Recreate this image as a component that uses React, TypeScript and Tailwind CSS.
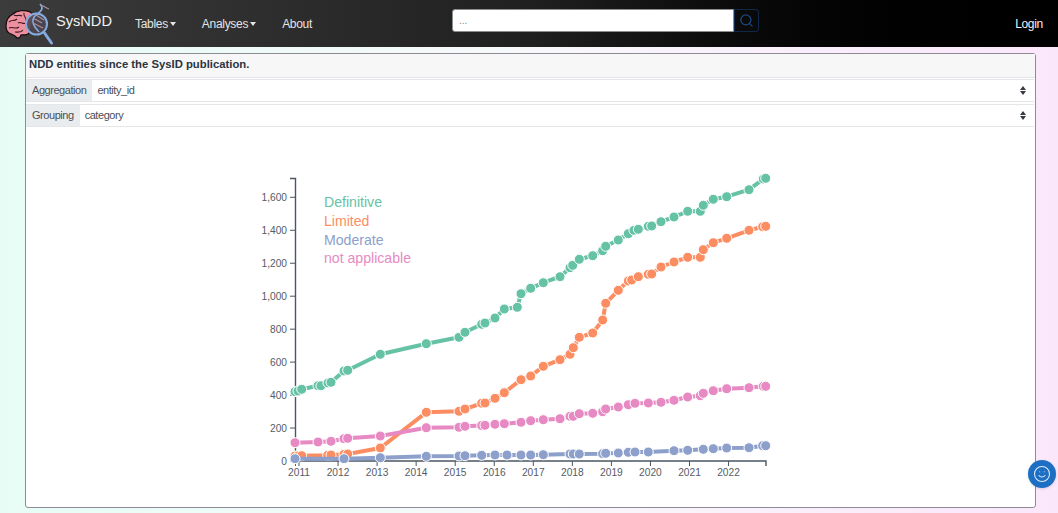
import { Search, Smile } from "lucide-react";

type Point = [number, number];

const definitive: Point[] = [
  [295, 391.7], [298, 391], [301.7, 389.3], [318, 385.7], [321, 385.7], [328, 383], [331, 382.3],
  [344, 371], [347.7, 370.3], [380.3, 354.3], [426.3, 343.7], [459, 337.3], [465, 332.3],
  [481.7, 324.3], [485, 323], [495, 318], [504.3, 309], [517.3, 307.3], [521, 293.7], [530.7, 288.3],
  [543.3, 282.7], [560, 276.7], [570, 267.7], [572.7, 265.3], [579.3, 259.3], [592.7, 255.7],
  [602.7, 250.7], [605.7, 246.3], [618.3, 240], [628.3, 233.7], [634, 230.3], [638.3, 229.3],
  [648.3, 226.3], [651.7, 226], [661, 221.7], [674, 217], [687.7, 211.3], [700.3, 211.3],
  [703.3, 205.3], [713.3, 199.3], [726.7, 196.7], [749, 189.7], [763.3, 179], [765.7, 178.3],
];

const limited: Point[] = [
  [295, 456], [298, 456], [301.7, 455.7], [327.7, 455.3], [331, 455], [344, 454.3], [347.7, 454],
  [380.3, 448], [426.3, 412.3], [459, 411.3], [465, 409], [481.7, 403.3], [485, 403], [495, 398.3],
  [504.3, 392.7], [521, 379.7], [530.7, 376], [543.3, 366.3], [560, 359.7], [570, 354.3],
  [573.3, 347.7], [579.3, 337.3], [592.7, 333], [602.7, 320], [605.7, 303.3], [618.3, 290.3],
  [628.3, 281], [631.7, 280], [638.3, 276.7], [648.3, 274.3], [651.7, 274], [661, 267], [674, 262],
  [687.7, 257.3], [700.3, 257.3], [703.3, 249.7], [713.3, 242.7], [726.7, 238.3], [749, 230.3],
  [762.7, 226.7], [765.7, 226.3],
];

const moderate: Point[] = [
  [295, 458.7], [344, 458.7], [380.3, 457.7], [426.3, 456.3], [459, 456], [465, 455.7], [481.7, 455.3],
  [495, 455], [507, 455], [521, 455], [530.7, 455], [543.3, 454.7], [570, 454], [573.3, 454],
  [579.3, 454], [602.7, 453.7], [605.7, 453.3], [618.3, 453], [628.3, 452.3], [635, 452], [648.3, 452],
  [674, 450.7], [687.7, 450.3], [703.3, 449.3], [713.3, 448.7], [726.7, 448], [749, 447.7],
  [762.7, 445.7], [765.7, 445.7],
];

const notApplicable: Point[] = [
  [295, 442.7], [318, 442], [331, 441.3], [344, 438.7], [347.7, 438.3], [380.3, 436], [426.3, 427.7],
  [459, 427.3], [465, 426.3], [481.7, 425.5], [485, 425.3], [495, 424.3], [504.3, 423.7], [521, 422.3],
  [530.7, 420.7], [543.3, 419.7], [560, 418.7], [570, 416.3], [573.3, 416.3], [579.3, 413.7],
  [592.7, 413.3], [602.7, 411.7], [605.7, 409], [618.3, 407], [628.3, 404.7], [635, 403.3], [648.3, 403],
  [661, 402.3], [674, 400.3], [687.7, 397], [700.3, 395.7], [703.3, 393.3], [713.3, 390.7],
  [726.7, 388.7], [749, 387.7], [763.3, 386.3], [765.7, 386.3],
];

const series = [
  { name: "Definitive", color: "#66c2a5", points: definitive, y: 206.5 },
  { name: "Limited", color: "#fc8d62", points: limited, y: 225.5 },
  { name: "Moderate", color: "#8da0cb", points: moderate, y: 244.5 },
  { name: "not applicable", color: "#e78ac3", points: notApplicable, y: 262.5 },
];

const yTicks = [0, 200, 400, 600, 800, 1000, 1200, 1400, 1600];
const years = [2011, 2012, 2013, 2014, 2015, 2016, 2017, 2018, 2019, 2020, 2021, 2022];

const Logo = () => (
  <svg viewBox="0 0 50 44" className="w-[50px] h-[44px] shrink-0">
    <g transform="translate(0 1)">
      <path
        d="M1 23C1 17 4 13 8 11C12 7 20 7 25 9C29 11 29 14 28 18C26 24 26 29 23 31C20 33 18 31 16 32C15 35 13 36 11 34C10 32 8 32 6 31C3 30 1 27 1 23Z"
        fill="#ec8f9f"
        stroke="#140a0c"
        strokeWidth="1.2"
      />
      <path
        d="M4 19C7 16 9 19 12 16M9 12C12 14 14 11 17 13M4 25C8 23 10 27 14 24M19 10C18 14 22 14 21 18M13 20C16 18 18 22 21 20M10 29C13 29 16 30 18 27"
        fill="none"
        stroke="#3f1820"
        strokeWidth="1.1"
      />
    </g>
    <circle cx="31.5" cy="22" r="10.5" fill="#4d4750" fillOpacity="0.9" stroke="#86abdf" strokeWidth="2" />
    <path d="M39.5 31L46.5 41" stroke="#86abdf" strokeWidth="3" strokeLinecap="round" />
    <path d="M35 2C41 8 32 11 29 15C26 20 30 26 34 30" fill="none" stroke="#86abdf" strokeWidth="1.7" />
    <path d="M36 3C39 4 41 6 44 7M28 16L37 21M28 21L38 26M31 13L39 18" fill="none" stroke="#a98f9f" strokeWidth="1.2" />
  </svg>
);

const SelectRow = ({ label, value }: { label: string; value: string }) => (
  <div className="flex h-[23px] mr-px border-y border-[#e4e6ea] bg-white text-[11px] tracking-[-0.45px] text-[#495057]">
    <div className="flex items-center px-[6px] bg-[#e9ecef]">{label}</div>
    <div className="flex flex-1 items-center justify-between pl-[5px] pr-[8px]">
      <span>{value}</span>
      <span className="flex flex-col gap-[1px]">
        <span className="border-x-[3px] border-b-[4px] border-x-transparent border-b-[#343a40]" />
        <span className="border-x-[3px] border-t-[4px] border-x-transparent border-t-[#343a40]" />
      </span>
    </div>
  </div>
);

const Chart = () => (
  <svg viewBox="231 129 600 352" className="w-[600px] h-[352px] mx-auto mt-[2px]">
    <path d="M290 178.5H295.5V461H766V466" fill="none" stroke="#4b5563" strokeWidth="1.4" />
    {yTicks.map((tick) => {
      const y = 461 - tick * 0.1648;
      return (
        <g key={tick}>
          <line x1="290" x2="295" y1={y} y2={y} stroke="#4b5563" />
          <text x="287" y={y + 3.5} textAnchor="end" fontSize="10.2" fill="#555b66">
            {tick.toLocaleString("en-US")}
          </text>
        </g>
      );
    })}
    <line x1="295.5" x2="295.5" y1="461" y2="466" stroke="#4b5563" />
    {years.map((year, i) => {
      const x = 299 + i * 39.05;
      return (
        <g key={year}>
          <line x1={x} x2={x} y1="461" y2="466" stroke="#4b5563" />
          <text x={x} y="476" textAnchor="middle" fontSize="10.2" fill="#555b66">
            {year}
          </text>
        </g>
      );
    })}
    {series.map((s) => (
      <g key={s.name}>
        <polyline
          points={s.points.map((p) => p.join(",")).join(" ")}
          fill="none"
          stroke={s.color}
          strokeWidth="4"
          strokeLinejoin="round"
        />
        {s.points.map((p) => (
          <circle key={p[0]} cx={p[0]} cy={p[1]} r="5" fill={s.color} stroke="white" strokeWidth="1" />
        ))}
        <text x="324" y={s.y} fontSize="14.1" fill={s.color}>
          {s.name}
        </text>
      </g>
    ))}
  </svg>
);

export default function App() {
  return (
    <div className="relative h-[513px] overflow-hidden bg-gradient-to-r from-[#e6fdf5] via-[#f8f8fb] to-[#fbe7fb] font-['Liberation_Sans',Arial,sans-serif]">
      <nav className="flex items-center h-[47px] pl-[5px] pr-[15px] bg-gradient-to-r from-[#3c3c3c] via-[#202020] to-[#000000] text-white">
        <Logo />
        <span className="ml-[1px] mb-[3px] text-[14.6px] text-[#f2f2f2]">SysNDD</span>
        <div className="flex items-center ml-[23px] gap-[26px] text-[12px] tracking-[-0.3px] text-[#e4e4e4]">
          <span className="flex items-center gap-[2px]">
            Tables
            <span className="border-x-[3.5px] border-t-[4px] border-x-transparent border-t-[#e4e4e4]" />
          </span>
          <span className="flex items-center gap-[2px]">
            Analyses
            <span className="border-x-[3.5px] border-t-[4px] border-x-transparent border-t-[#e4e4e4]" />
          </span>
          <span>About</span>
        </div>
        <div className="flex ml-[140px] mb-[6px] h-[23px]">
          <div className="w-[282px] pl-[6px] rounded-l-[3px] bg-white border border-[#8d8d8d] text-[10px] leading-[22px] text-[#8b8b8b]">
            ...
          </div>
          <div className="flex w-[25px] items-center justify-center rounded-r-[3px] border border-[#10294a] text-[#1c4a80]">
            <Search size={15} strokeWidth={2} />
          </div>
        </div>
        <span className="ml-auto text-[12px] tracking-[-0.3px] text-[#f2f2f2]">Login</span>
      </nav>

      <main className="ml-[25px] mt-[6px] w-[1011px] h-[455px] rounded-[3px] border border-[#8e8b95] bg-white">
        <div className="h-[24px] px-[3px] pt-px bg-[#f7f7f7] border-b border-[#e4e6ea] text-[11.3px] leading-[18px] font-bold text-[#2b3440]">
          NDD entities since the SysID publication.
        </div>
        <div className="flex flex-col gap-[2px] mt-[1px]">
          <SelectRow label="Aggregation" value="entity_id" />
          <SelectRow label="Grouping" value="category" />
        </div>
        <Chart />
      </main>

      <button className="absolute left-[1028px] top-[460px] flex size-[28px] items-center justify-center rounded-full bg-[#1d6fc4] text-[#e2edf8] shadow">
        <Smile size={18} strokeWidth={1.4} />
      </button>
    </div>
  );
}
